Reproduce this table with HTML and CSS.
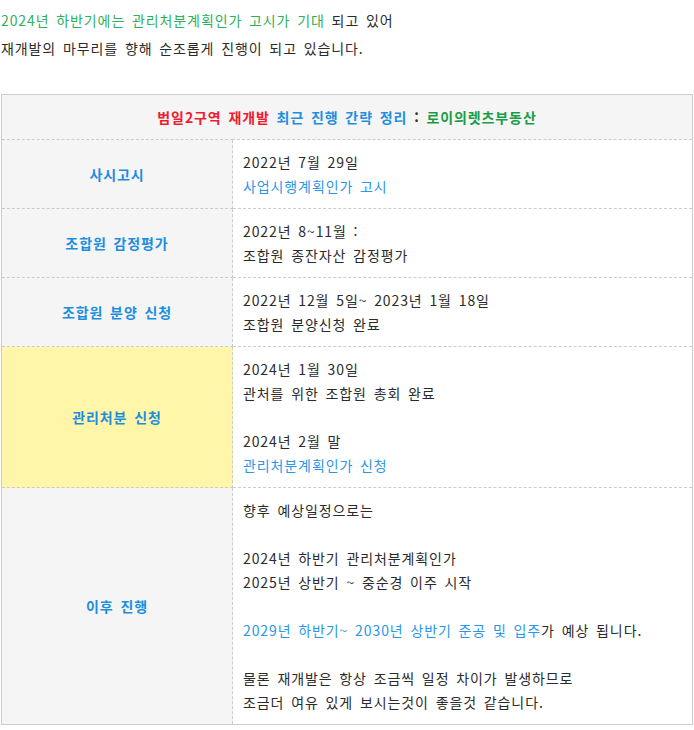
FILE: index.html
```html
<!DOCTYPE html>
<html lang="ko">
<head>
<meta charset="utf-8">
<link rel="stylesheet" href="styles.css">
</head>
<body>
<div class="page">
  <p class="intro"><span class="green">2024년 하반기에는 관리처분계획인가 고시가 기대</span> 되고 있어<br>재개발의 마무리를 향해 순조롭게 진행이 되고 있습니다.</p>
  <table class="timeline">
    <tr>
      <th colspan="2" class="head"><span class="red">범일2구역 재개발</span> <span class="blue">최근 진행 간략 정리</span> : <span class="dgreen">로이의렛츠부동산</span></th>
    </tr>
    <tr>
      <td class="label">사시고시</td>
      <td class="desc">2022년 7월 29일<br><span class="lblue">사업시행계획인가 고시</span></td>
    </tr>
    <tr>
      <td class="label">조합원 감정평가</td>
      <td class="desc">2022년 8~11월 :<br>조합원 종잔자산 감정평가</td>
    </tr>
    <tr>
      <td class="label">조합원 분양 신청</td>
      <td class="desc">2022년 12월 5일~ 2023년 1월 18일<br>조합원 분양신청 완료</td>
    </tr>
    <tr>
      <td class="label yellow">관리처분 신청</td>
      <td class="desc">2024년 1월 30일<br>관처를 위한 조합원 총회 완료<br><br>2024년 2월 말<br><span class="lblue">관리처분계획인가 신청</span></td>
    </tr>
    <tr>
      <td class="label">이후 진행</td>
      <td class="desc">향후 예상일정으로는<br><br>2024년 하반기 관리처분계획인가<br>2025년 상반기 ~ 중순경 이주 시작<br><br><span class="lblue">2029년 하반기~ 2030년 상반기 준공 및 입주</span>가 예상 됩니다.<br><br>물론 재개발은 항상 조금씩 일정 차이가 발생하므로<br>조금더 여유 있게 보시는것이 좋을것 같습니다.</td>
    </tr>
  </table>
</div>
</body>
</html>
```

FILE: styles.css
```css
html, body {
  margin: 0;
  padding: 0;
  background: #ffffff;
}
body {
  font-family: "Noto Sans CJK KR", "Noto Sans", sans-serif;
  font-size: 14px;
  color: #2b2b2b;
  letter-spacing: 0.9px;
  word-spacing: 2px;
}
.page {
  padding: 6px 1px 0 1px;
}
.intro {
  margin: 0 0 32px 0;
  line-height: 28px;
}
.green {
  color: #2fb05a;
}
.timeline {
  width: 692px;
  border-collapse: collapse;
  border: 1px solid #cccccc;
  line-height: 24px;
}
.timeline td, .timeline th {
  border: 1px dashed #cccccc;
  padding: 10px;
}
.head {
  background: #f5f5f5;
  font-weight: bold;
  height: 24px;
  color: #333;
}
.red { color: #ee1c2e; }
.blue { color: #1f8fe0; }
.dgreen { color: #1a9c45; }
.lblue { color: #2b96e8; }
.label {
  width: 210px;
  background: #f5f5f5;
  color: #1d8de0;
  font-weight: bold;
  text-align: center;
  vertical-align: middle;
}
.label.yellow {
  background: #fff6a9;
}
.desc {
  vertical-align: top;
  text-align: left;
}
```
